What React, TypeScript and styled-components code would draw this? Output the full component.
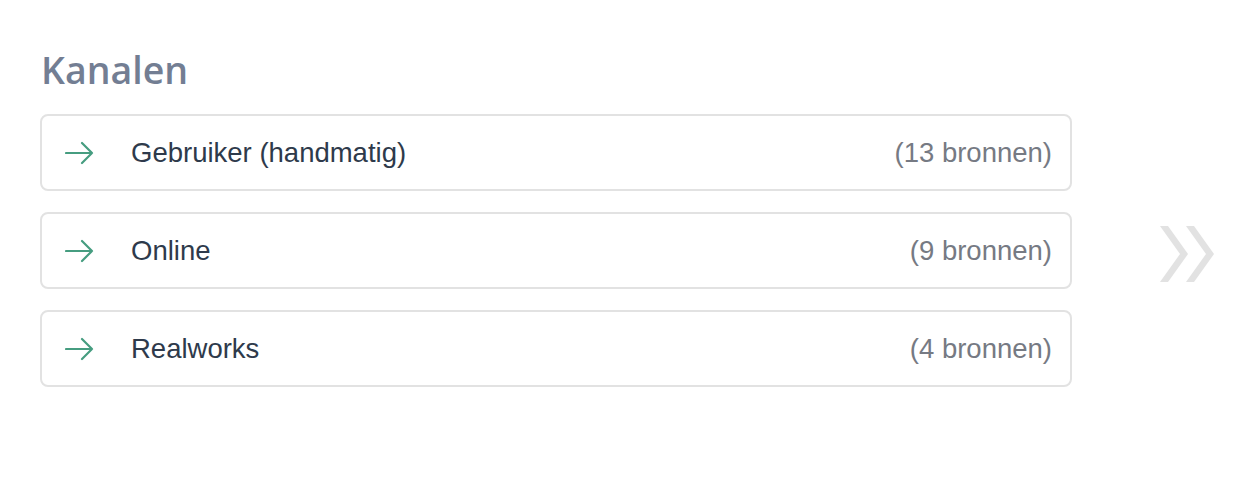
import React from 'react'
import styled, { createGlobalStyle } from 'styled-components'

const GlobalStyle = createGlobalStyle`
  body {
    margin: 0;
    background: #ffffff;
    font-family: 'Liberation Sans', Arial, sans-serif;
  }
`

const Page = styled.div`
  display: flex;
  align-items: flex-start;
  padding: 48px 0 0 40px;
  width: 1246px;
  height: 498px;
  box-sizing: border-box;
`

const Section = styled.section`
  width: 1032px;
  flex-shrink: 0;
`

const Title = styled.h1`
  margin: 0 0 22px 1px;
  font-family: 'Open Sans', sans-serif;
  font-size: 37.5px;
  font-weight: 600;
  line-height: 44px;
  color: #737e93;
`

const List = styled.div`
  display: flex;
  flex-direction: column;
  gap: 21px;
`

const Row = styled.div`
  display: flex;
  align-items: center;
  height: 77px;
  box-sizing: border-box;
  padding: 0 18px 0 23px;
  border: 2px solid #e2e2e2;
  border-radius: 8px;
`

const Arrow = styled.svg`
  width: 30px;
  height: 24px;
  flex-shrink: 0;
`

const Label = styled.span`
  flex: 1;
  margin-left: 36px;
  font-size: 27.5px;
  color: #2e3a4b;
`

const Count = styled.span`
  font-size: 27.5px;
  color: #767a83;
`

const Side = styled.div`
  flex: 1;
  display: flex;
  align-items: center;
  padding-left: 88px;
  height: 77px;
  margin-top: 167px;
`

const channels = [
  { name: 'Gebruiker (handmatig)', count: 13 },
  { name: 'Online', count: 9 },
  { name: 'Realworks', count: 4 },
]

const ArrowIcon = () => (
  <Arrow viewBox="0 0 30 24" fill="none">
    <path
      d="M1 12 H27 M17 2 L27 12 L17 22"
      stroke="#469d80"
      strokeWidth="2.2"
      strokeLinecap="round"
      strokeLinejoin="round"
    />
  </Arrow>
)

const Chevrons = () => (
  <svg width="54" height="56" viewBox="0 0 54 56">
    <polygon points="0,0 8,0 28,28 8,56 0,56 20,28" fill="#e2e2e2" />
    <polygon points="26,0 34,0 54,28 34,56 26,56 46,28" fill="#e2e2e2" />
  </svg>
)

export default function App() {
  return (
    <>
      <GlobalStyle />
      <Page>
        <Section>
          <Title>Kanalen</Title>
          <List>
            {channels.map((c) => (
              <Row key={c.name}>
                <ArrowIcon />
                <Label>{c.name}</Label>
                <Count>({c.count} bronnen)</Count>
              </Row>
            ))}
          </List>
        </Section>
        <Side>
          <Chevrons />
        </Side>
      </Page>
    </>
  )
}
